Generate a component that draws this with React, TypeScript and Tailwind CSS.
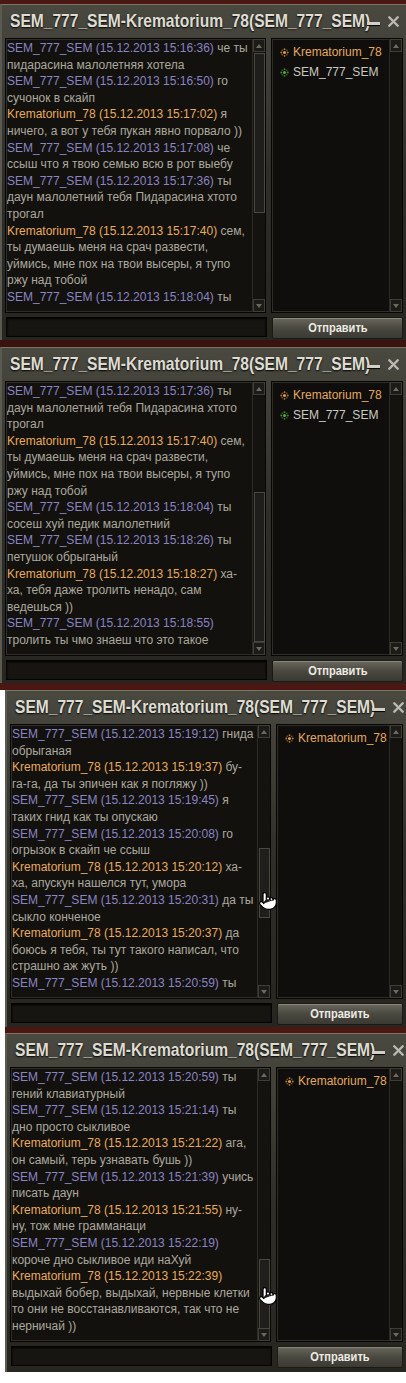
import { X, Pointer } from "lucide-react";

type Line = { who?: "s" | "k"; h?: string; t: string };

const S = (time: string, t: string): Line => ({ who: "s", h: `SEM_777_SEM (15.12.2013 ${time})`, t });
const K = (time: string, t: string): Line => ({ who: "k", h: `Krematorium_78 (15.12.2013 ${time})`, t });
const T = (t: string): Line => ({ t });

const panel1: Line[] = [
	S("15:16:36", " че ты"),
	T("пидарасина малолетняя хотела"),
	S("15:16:50", " го"),
	T("сучонок в скайп"),
	K("15:17:02", " я"),
	T("ничего, а вот у тебя пукан явно порвало ))"),
	S("15:17:08", " че"),
	T("ссыш что я твою семью всю в рот выебу"),
	S("15:17:36", " ты"),
	T("даун малолетний тебя Пидарасина хтото"),
	T("трогал"),
	K("15:17:40", " сем,"),
	T("ты думаешь меня на срач развести,"),
	T("уймись, мне пох на твои высеры, я тупо"),
	T("ржу над тобой"),
	S("15:18:04", " ты"),
];

const panel2: Line[] = [
	S("15:17:36", " ты"),
	T("даун малолетний тебя Пидарасина хтото"),
	T("трогал"),
	K("15:17:40", " сем,"),
	T("ты думаешь меня на срач развести,"),
	T("уймись, мне пох на твои высеры, я тупо"),
	T("ржу над тобой"),
	S("15:18:04", " ты"),
	T("сосеш хуй педик малолетний"),
	S("15:18:26", " ты"),
	T("петушок обрыганый"),
	K("15:18:27", " ха-"),
	T("ха, тебя даже тролить ненадо, сам"),
	T("ведешься ))"),
	S("15:18:55", ""),
	T("тролить ты чмо знаеш что это такое"),
];

const panel3: Line[] = [
	S("15:19:12", " гнида"),
	T("обрыганая"),
	K("15:19:37", " бу-"),
	T("га-га, да ты эпичен как я погляжу ))"),
	S("15:19:45", " я"),
	T("таких гнид как ты опускаю"),
	S("15:20:08", " го"),
	T("огрызок в скайп че ссыш"),
	K("15:20:12", " ха-"),
	T("ха, апускун нашелся тут, умора"),
	S("15:20:31", " да ты"),
	T("сыкло конченое"),
	K("15:20:37", " да"),
	T("боюсь я тебя, ты тут такого написал, что"),
	T("страшно аж жуть ))"),
	S("15:20:59", " ты"),
];

const panel4: Line[] = [
	S("15:20:59", " ты"),
	T("гений клавиатурный"),
	S("15:21:14", " ты"),
	T("дно просто сыкливое"),
	K("15:21:22", " ага,"),
	T("он самый, терь узнавать бушь ))"),
	S("15:21:39", " учись"),
	T("писать даун"),
	K("15:21:55", " ну-"),
	T("ну, тож мне грамманаци"),
	S("15:22:19", ""),
	T("короче дно сыкливое иди наХуй"),
	K("15:22:39", ""),
	T("выдыхай бобер, выдыхай, нервные клетки"),
	T("то они не восстанавливаются, так что не"),
	T("нерничай ))"),
];

function Scrollbar({ thumbTop, thumbH }: { thumbTop?: number; thumbH?: number }) {
	return (
		<div className="relative flex w-[13px] flex-col border-l border-[#2c2b26] bg-[#141310]">
			<div className="flex h-[13px] items-center justify-center border border-[#3e3d36] bg-[#1c1b17]">
				<div className="h-0 w-0 border-x-[3px] border-b-[4px] border-x-transparent border-b-[#6b6a60]" />
			</div>
			<div className="flex-1" />
			<div className="flex h-[13px] items-center justify-center border border-[#3e3d36] bg-[#1c1b17]">
				<div className="h-0 w-0 border-x-[3px] border-t-[4px] border-x-transparent border-t-[#6b6a60]" />
			</div>
			{thumbTop !== undefined && (
				<div
					className="absolute left-[1px] right-0 border border-[#4a4940] bg-[#1f1e1a]"
					style={{ top: thumbTop, height: thumbH }}
				/>
			)}
		</div>
	);
}

function Star({ color }: { color: string }) {
	return (
		<svg width="9" height="9" viewBox="0 0 9 9" className="mr-[4px] shrink-0">
			<circle cx="4.5" cy="4.5" r="1.6" fill={color} />
			<circle cx="4.5" cy="1.2" r="0.9" fill={color} opacity="0.8" />
			<circle cx="4.5" cy="7.8" r="0.9" fill={color} opacity="0.8" />
			<circle cx="1.2" cy="4.5" r="0.9" fill={color} opacity="0.8" />
			<circle cx="7.8" cy="4.5" r="0.9" fill={color} opacity="0.8" />
			<circle cx="2.2" cy="2.2" r="0.8" fill={color} opacity="0.6" />
			<circle cx="6.8" cy="2.2" r="0.8" fill={color} opacity="0.6" />
			<circle cx="2.2" cy="6.8" r="0.8" fill={color} opacity="0.6" />
			<circle cx="6.8" cy="6.8" r="0.8" fill={color} opacity="0.6" />
		</svg>
	);
}

function Panel({
	lines,
	both,
	thumbTop,
	thumbH,
	cursor,
	height,
}: {
	lines: Line[];
	both: boolean;
	thumbTop: number;
	thumbH: number;
	cursor?: number;
	height: number;
}) {
	return (
		<div
			className="relative flex flex-col border-l-[2px] border-t border-[#5b5a50] border-t-[#7a7566] bg-gradient-to-b from-[#4a4940] via-[#2f2e29] to-[#26251f] font-['Liberation_Sans',Arial,sans-serif]"
			style={{ height }}
		>
			<div className="relative h-[33px] overflow-hidden">
				<span className="absolute left-[8px] top-[3px] origin-left scale-x-[0.82] whitespace-nowrap text-[19px] font-bold leading-[26px] text-[#dedcd2] [text-shadow:0_1px_2px_#000]">
					SEM_777_SEM-Krematorium_78(SEM_777_SEM)
				</span>
				<div className="absolute left-[365px] top-[17px] h-[3px] w-[13px] bg-[#d2d0c6] shadow-[0_1px_1px_#000]" />
				<X className="absolute left-[383px] top-[8px] text-[#bcbab0]" size={17} strokeWidth={3.4} />
			</div>
			<div className="flex h-[275px] gap-[5px] pl-[3px] pr-[3px]">
				<div className="flex w-[261px] border border-[#060605] bg-[#12110e] shadow-[inset_0_0_0_1px_#2e2d28]">
					<div className="flex-1 overflow-hidden pl-[1px] pt-[1px] text-[12px] leading-[16.6px] text-[#aca89d]">
						{lines.map((l, i) => (
							<div key={i} className="whitespace-nowrap">
								{l.h && (
									<span className={l.who === "s" ? "text-[#8a84c2]" : "text-[#e9aa5e]"}>{l.h}</span>
								)}
								{l.t}
							</div>
						))}
					</div>
					<Scrollbar thumbTop={thumbTop} thumbH={thumbH} />
				</div>
				<div className="flex flex-1 border border-[#060605] bg-[#0f0e0c] shadow-[inset_0_0_0_1px_#2e2d28]">
					<div className="flex-1 pl-[8px] pt-[3px] text-[12px] leading-[20px]">
						<div className="flex items-center text-[#e4a962]">
							<Star color="#e09a40" />
							Krematorium_78
						</div>
						{both && (
							<div className="flex items-center text-[#cac9c0]">
								<Star color="#4fa83a" />
								SEM_777_SEM
							</div>
						)}
					</div>
					<Scrollbar />
				</div>
			</div>
			<div className="mt-[4px] flex gap-[5px] pl-[4px] pr-[3px]">
				<div className="h-[20px] w-[261px] border border-[#050504] bg-[#161512] shadow-[inset_0_1px_2px_#000]" />
				<button className="flex h-[22px] flex-1 items-center justify-center rounded-[2px] border border-[#1a1a16] bg-gradient-to-b from-[#6a685d] via-[#4a4940] to-[#3a3933] text-[13px] font-bold text-[#ecebe4] shadow-[inset_0_1px_0_#8a887c]">
					<span className="scale-x-[0.85]">Отправить</span>
				</button>
			</div>
			{cursor !== undefined && (
				<Pointer
					className="absolute left-[251px]"
					style={{ top: cursor }}
					size={20}
					fill="#ffffff"
					color="#000000"
					strokeWidth={1.5}
				/>
			)}
		</div>
	);
}

export default function App() {
	return (
		<div className="w-[406px] h-[1383px] overflow-hidden bg-white">
			<div className="bg-[#4a1712] pt-[4px] pb-[7px]">
				<Panel lines={panel1} both thumbTop={14} thumbH={160} height={336} />
				<div className="h-[7px] bg-[#3a130f]" />
				<Panel lines={panel2} both thumbTop={110} thumbH={150} height={336} />
			</div>
			<div className="pl-[5px]">
				<Panel lines={panel3} both={false} thumbTop={123} thumbH={70} cursor={200} height={337} />
				<div className="h-[6px] bg-[#4a1712]" />
				<Panel lines={panel4} both={false} thumbTop={191} thumbH={70} cursor={252} height={339} />
			</div>
		</div>
	);
}
